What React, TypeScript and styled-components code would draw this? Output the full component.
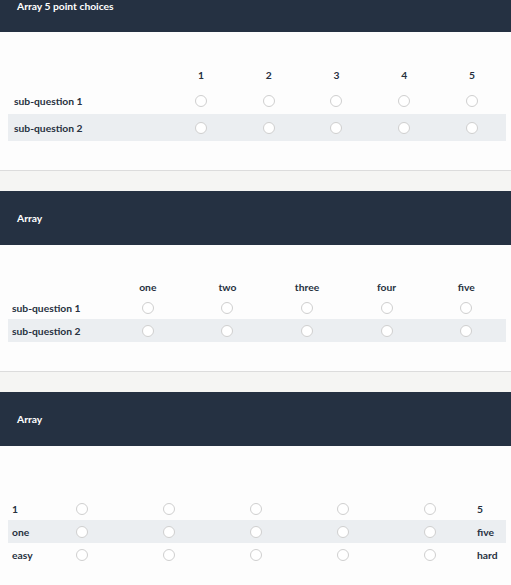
import React from 'react'
import styled, {createGlobalStyle} from 'styled-components'

const GlobalStyle = createGlobalStyle`
  html, body {
    margin: 0;
    padding: 0;
    background: #fdfdfd;
  }
  body {
    font-family: Lato, "Open Sans", sans-serif;
    color: #27313f;
  }
`

const Header = styled.div<{$tall?: boolean}>`
  display: flex;
  align-items: ${p => (p.$tall ? 'center' : 'flex-start')};
  height: ${p => (p.$tall ? '54px' : '32px')};
  padding: 0 17px;
  background: #253142;
  color: #fff;
  font-size: 10.3px;
  font-weight: 700;
  line-height: 12px;
`
const Body = styled.div<{$top: number; $bottom: number}>`
  padding: ${p => p.$top}px 5px ${p => p.$bottom}px 8px;
  background: #fdfdfd;
`
const Gap = styled.div`
  height: 20px;
  border-top: 1px solid #dcdcdc;
  background: #f5f5f3;
`
const Table = styled.table`
  width: 498px;
  border-collapse: collapse;
  table-layout: fixed;
  font-size: 10.3px;
  font-weight: 700;
`
const Row = styled.tr<{$h: number; $odd?: boolean}>`
  height: ${p => p.$h}px;
  background: ${p => (p.$odd ? '#ebeef1' : 'transparent')};
`
const Label = styled.td<{$pad: number}>`
  padding: 0 0 0 ${p => p.$pad}px;
  text-align: left;
  white-space: nowrap;
`
const Head = styled.th`
  padding: 0;
  text-align: center;
  font-weight: 700;
`
const Cell = styled.td`
  padding: 0;
  text-align: center;
  vertical-align: middle;
`
const Radio = styled.span`
  display: inline-block;
  width: 10px;
  height: 10px;
  border: 1px solid #cfcfcf;
  border-radius: 50%;
  background: #fff;
  vertical-align: middle;
`

type MatrixProps = {
  labelWidth: number
  labelPad: number
  headers: string[]
  headH: number
  rowH: number
  rows: string[]
}

const Matrix: React.FC<MatrixProps> = ({labelWidth, labelPad, headers, headH, rowH, rows}) => (
  <Table>
    <colgroup>
      <col style={{width: labelWidth}} />
      {headers.map(h => <col key={h} />)}
    </colgroup>
    <thead>
      <Row $h={headH}>
        <Head />
        {headers.map(h => <Head key={h}>{h}</Head>)}
      </Row>
    </thead>
    <tbody>
      {rows.map((r, i) => (
        <Row key={r} $h={rowH} $odd={i % 2 === 1}>
          <Label $pad={labelPad}>{r}</Label>
          {headers.map(h => <Cell key={h}><Radio /></Cell>)}
        </Row>
      ))}
    </tbody>
  </Table>
)

const EndLabel = styled.td`
  padding: 0 0 0 4px;
  text-align: left;
`

const Semantic: React.FC<{rows: [string, string][]}> = ({rows}) => (
  <Table>
    <colgroup>
      <col style={{width: 30}} />
      <col /><col /><col /><col /><col />
      <col style={{width: 33}} />
    </colgroup>
    <tbody>
      {rows.map(([l, r], i) => (
        <Row key={l} $h={23} $odd={i % 2 === 1}>
          <Label $pad={4}>{l}</Label>
          {[1, 2, 3, 4, 5].map(n => <Cell key={n}><Radio /></Cell>)}
          <EndLabel>{r}</EndLabel>
        </Row>
      ))}
    </tbody>
  </Table>
)

export default function App() {
  return (
    <>
      <GlobalStyle />
      <Header>Array 5 point choices</Header>
      <Body $top={30} $bottom={29}>
        <Matrix
          labelWidth={159}
          labelPad={6}
          headers={['1', '2', '3', '4', '5']}
          headH={25}
          rowH={27}
          rows={['sub-question 1', 'sub-question 2']}
        />
      </Body>
      <Gap />
      <Header $tall>Array</Header>
      <Body $top={32} $bottom={29}>
        <Matrix
          labelWidth={100}
          labelPad={4}
          headers={['one', 'two', 'three', 'four', 'five']}
          headH={19}
          rowH={23}
          rows={['sub-question 1', 'sub-question 2']}
        />
      </Body>
      <Gap />
      <Header $tall>Array</Header>
      <Body $top={51} $bottom={20}>
        <Semantic rows={[['1', '5'], ['one', 'five'], ['easy', 'hard']]} />
      </Body>
    </>
  )
}
